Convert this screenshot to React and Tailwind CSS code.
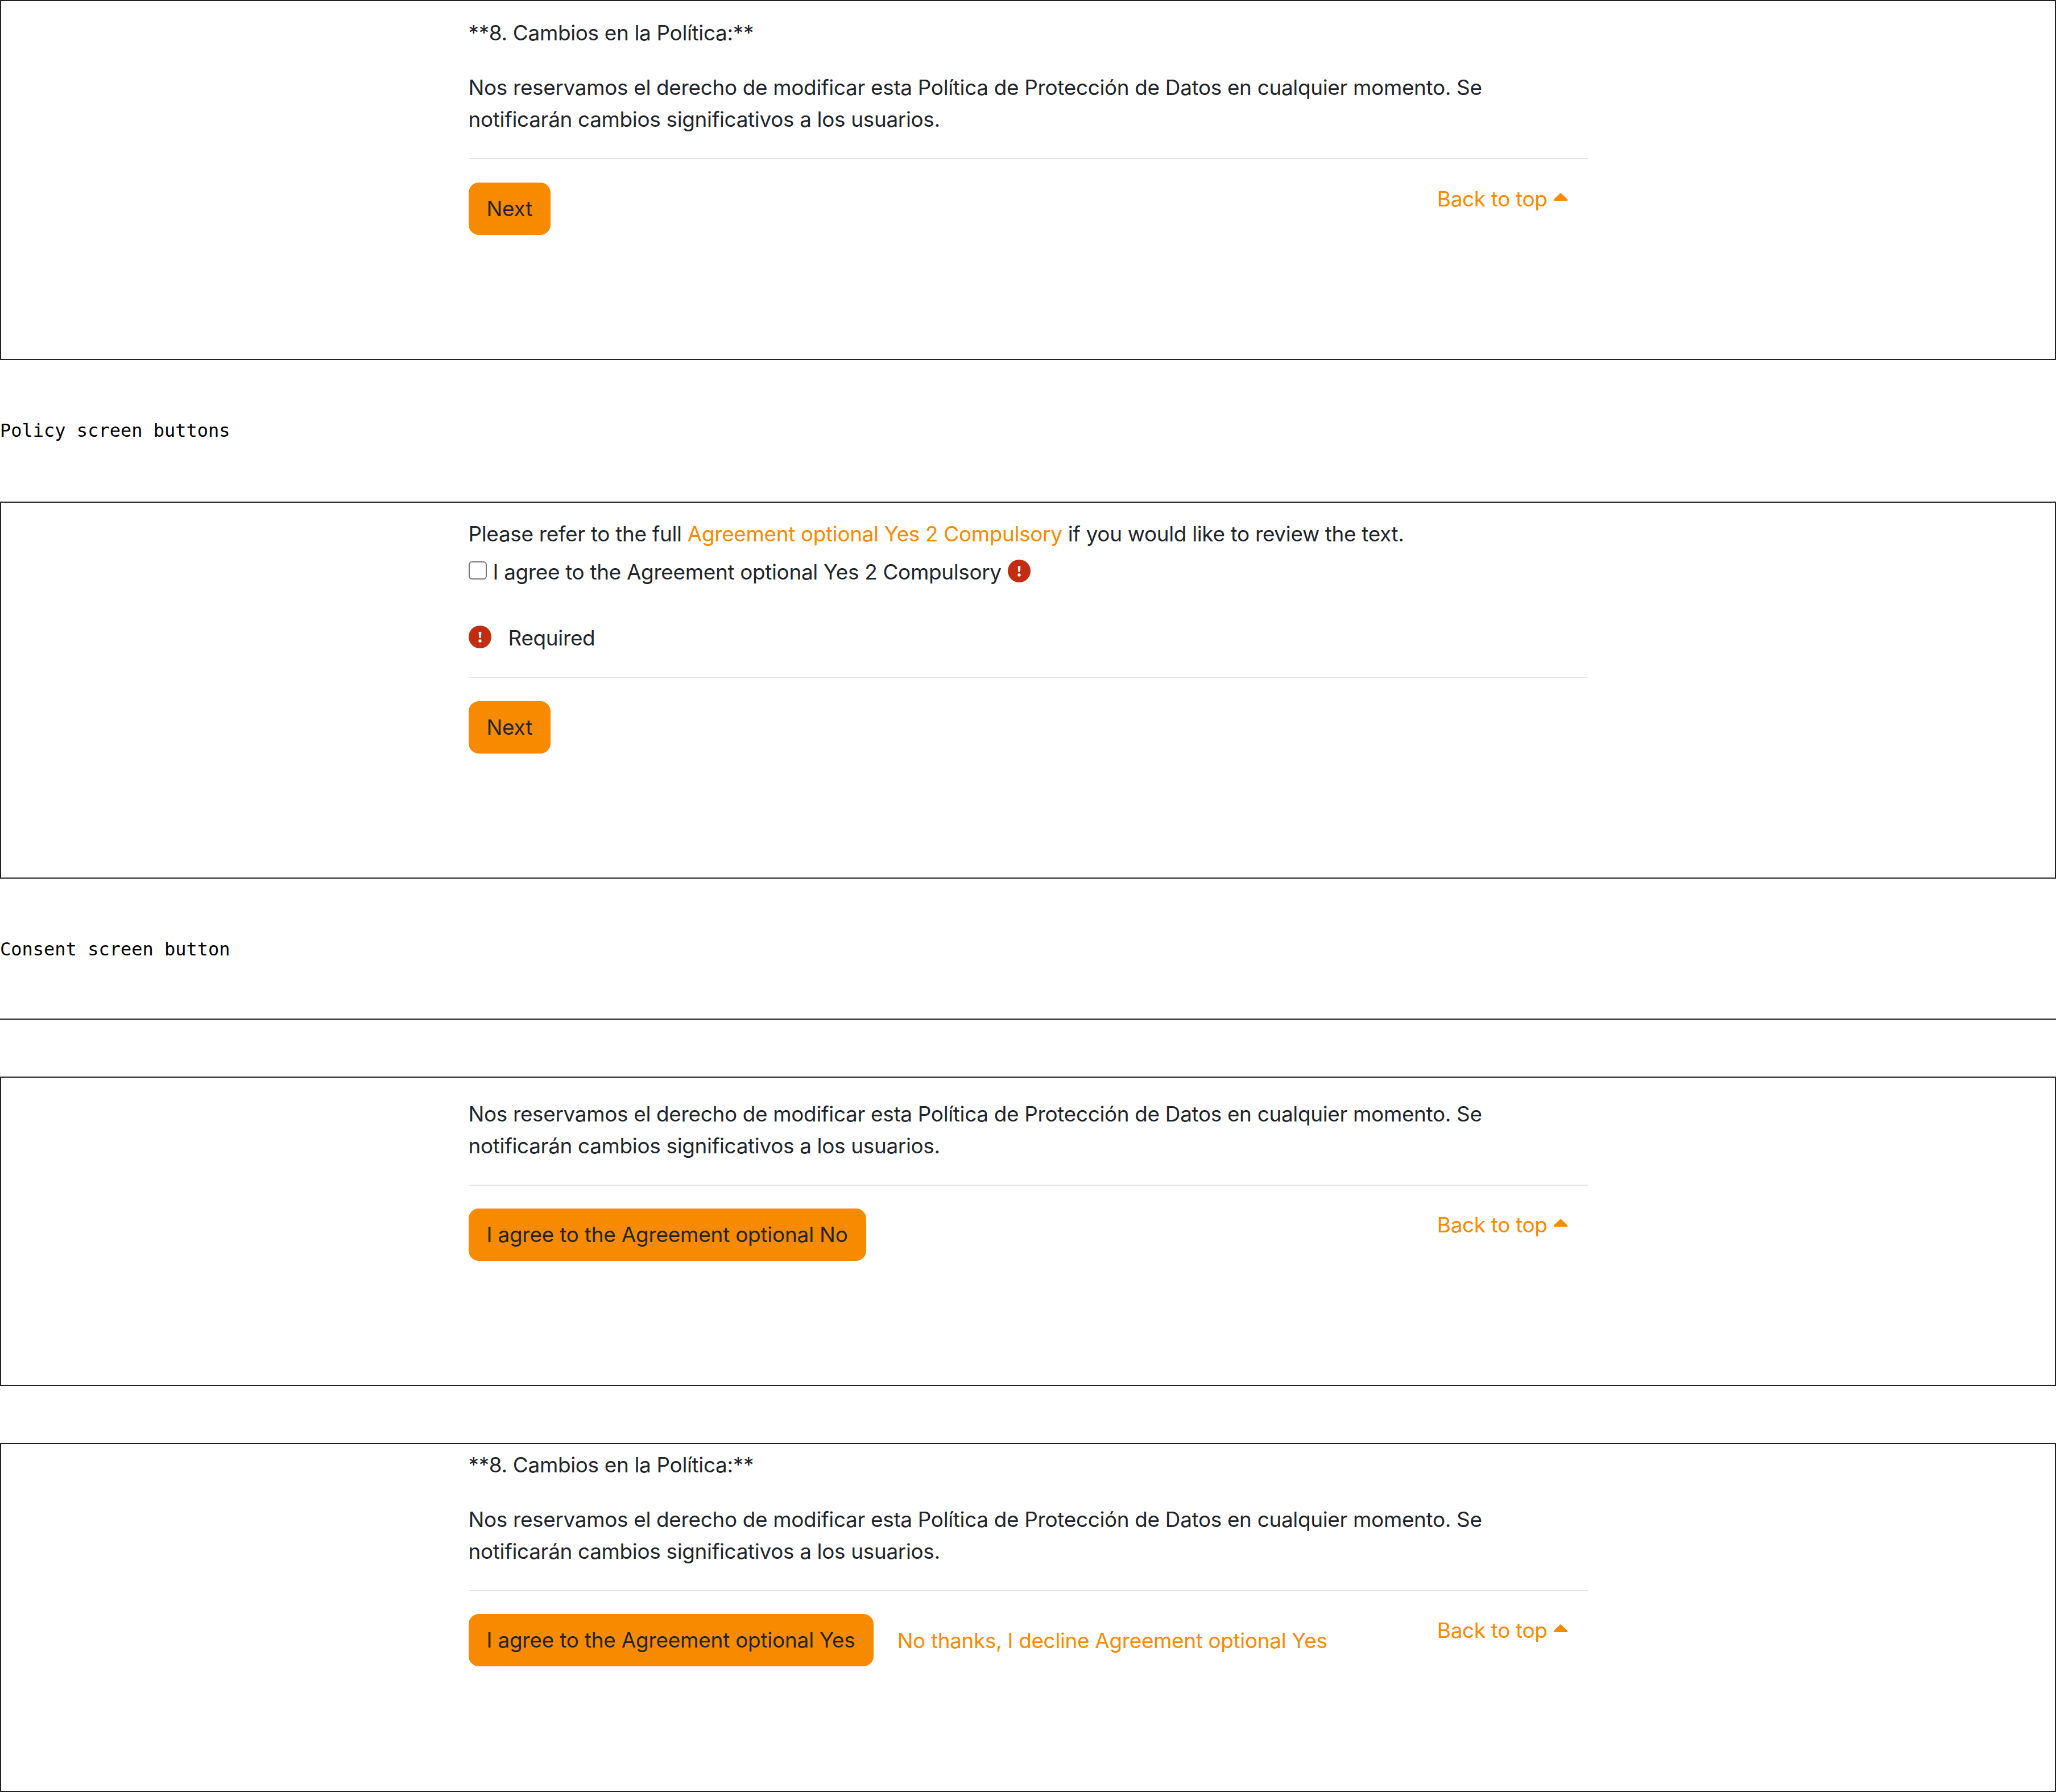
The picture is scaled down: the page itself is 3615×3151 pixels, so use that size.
const body = "font-['Inter',sans-serif] text-[36.9px] leading-[56px] tracking-[-0.32px] text-[#212529]";

function Caret() {
  return (
    <svg width="26" height="16" viewBox="0 0 26 16" className="ml-[10px] mt-[-8px] shrink-0">
      <path d="M13 1 L25 12.5 Q26 15 23.5 15 L2.5 15 Q0 15 1 12.5 Z" fill="#f88a00" />
    </svg>
  );
}

function Alert({ className }) {
  return (
    <svg width="40" height="40" viewBox="0 0 40 40" className={className}>
      <circle cx="20" cy="20" r="20" fill="#c22c10" />
      <path d="M17.6 12.5 Q17.6 11 20 11 Q22.4 11 22.4 12.5 L21.6 21 Q21.4 22 20 22 Q18.6 22 18.4 21 Z" fill="#fff" />
      <circle cx="20" cy="27" r="2.7" fill="#fff" />
    </svg>
  );
}

function Frame({ height, top, children }) {
  return (
    <div className={`${height} border-2 border-[#222] ${body}`}>
      <div className={`${top} mx-auto w-[1968px]`}>{children}</div>
    </div>
  );
}

function Terms() {
  return (
    <p>
      Nos reservamos el derecho de modificar esta Política de Protección de Datos en cualquier momento. Se
      <br />
      notificarán cambios significativos a los usuarios.
    </p>
  );
}

function PrimaryButton({ children }) {
  return (
    <button className="h-[92px] shrink-0 rounded-[18px] bg-[#f88a00] px-8 tracking-[-0.2px] text-[#212529]">
      {children}
    </button>
  );
}

function BackToTop() {
  return (
    <a className="ml-auto flex items-center pr-[35px] pt-[1px] text-[#f88a00]">
      Back to top
      <Caret />
    </a>
  );
}

function Rule({ className }) {
  return <div className={`h-[2px] bg-[#e6e6e6] ${className}`} />;
}

function Label({ children }) {
  return <p className="font-['DejaVu_Sans_Mono',monospace] text-[32px] leading-[40px] text-black">{children}</p>;
}

export default function App() {
  return (
    <div className="w-[3615px] bg-white">
      <Frame height="h-[633px]" top="pt-[28px]">
        <p>**8. Cambios en la Política:**</p>
        <div className="mt-[40px]">
          <Terms />
        </div>
        <Rule className="mt-[40px]" />
        <div className="mt-[41px] flex items-start">
          <PrimaryButton>Next</PrimaryButton>
          <BackToTop />
        </div>
      </Frame>

      <div className="pt-[104px] pb-[105px]">
        <Label>Policy screen buttons</Label>
      </div>

      <Frame height="h-[663px]" top="pt-[27px]">
        <p>
          Please refer to the full <a className="text-[#f88a00]">Agreement optional Yes 2 Compulsory</a> if you would
          like to review the text.
        </p>
        <div className="mt-[11px] flex items-start">
          <input
            type="checkbox"
            className="m-0 mt-[9px] h-8 w-8 appearance-none rounded-[6px] border-2 border-[#767676] bg-white"
          />
          <span className="ml-[11px]">I agree to the Agreement optional Yes 2 Compulsory</span>
          <Alert className="ml-[11px] mt-[6px]" />
        </div>
        <div className="mt-[60px] flex items-start">
          <Alert className="mt-[6px]" />
          <span className="ml-[30px]">Required</span>
        </div>
        <Rule className="mt-[40px]" />
        <div className="mt-[41px]">
          <PrimaryButton>Next</PrimaryButton>
        </div>
      </Frame>

      <div className="pt-[104px] pb-[102px]">
        <Label>Consent screen button</Label>
      </div>

      <div className="h-[2px] bg-[#222]" />

      <div className="h-[100px]" />

      <Frame height="h-[544px]" top="pt-[36px]">
        <Terms />
        <Rule className="mt-[40px]" />
        <div className="mt-[40px] flex items-start">
          <PrimaryButton>I agree to the Agreement optional No</PrimaryButton>
          <BackToTop />
        </div>
      </Frame>

      <div className="h-[100px]" />

      <Frame height="h-[614px]" top="pt-[9px]">
        <p>**8. Cambios en la Política:**</p>
        <div className="mt-[40px]">
          <Terms />
        </div>
        <Rule className="mt-[40px]" />
        <div className="mt-[40px] flex items-start">
          <PrimaryButton>I agree to the Agreement optional Yes</PrimaryButton>
          <a className="ml-[42px] mt-[19px] text-[#f88a00]">No thanks, I decline Agreement optional Yes</a>
          <BackToTop />
        </div>
      </Frame>
    </div>
  );
}
